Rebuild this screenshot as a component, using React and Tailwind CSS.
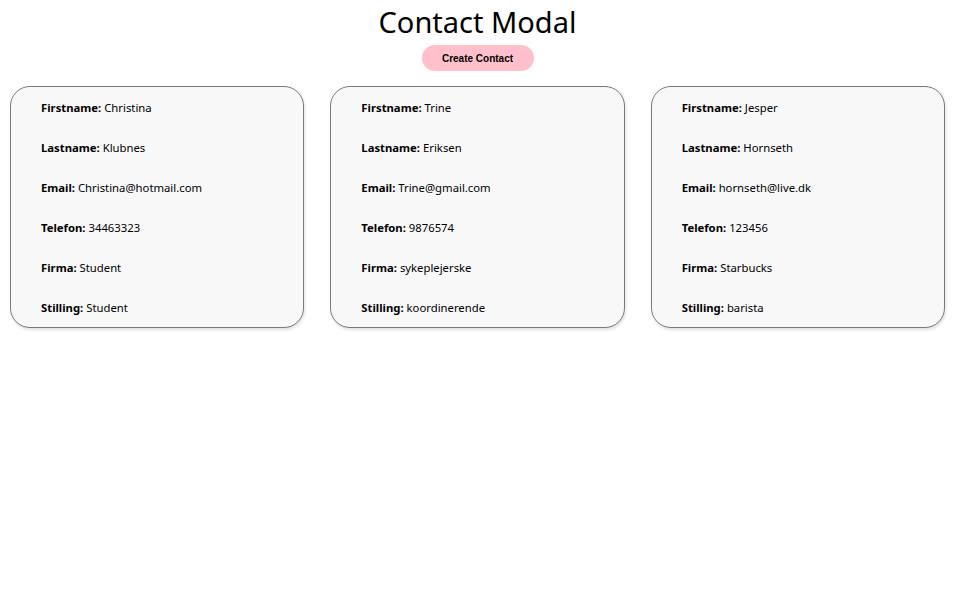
import React from 'react';

// Kontakter som vises i kortene
const contacts = [
  {
    firstname: 'Christina',
    lastname: 'Klubnes',
    email: 'Christina@hotmail.com',
    telefon: '34463323',
    firma: 'Student',
    stilling: 'Student'
  },
  {
    firstname: 'Trine',
    lastname: 'Eriksen',
    email: 'Trine@gmail.com',
    telefon: '9876574',
    firma: 'sykeplejerske',
    stilling: 'koordinerende'
  },
  {
    firstname: 'Jesper',
    lastname: 'Hornseth',
    email: 'hornseth@live.dk',
    telefon: '123456',
    firma: 'Starbucks',
    stilling: 'barista'
  }
];

const Row = ({ label, value }) => (
  <p className="h-4 leading-4 text-[11.3px] text-black">
    <span className="font-bold">{label}:</span> {value}
  </p>
);

const ContactCard = ({ contact }) => (
  <div className="h-[242px] rounded-[20px] border border-[#7a7a7a] bg-[#f8f8f8] shadow-[1px_2px_3px_rgba(0,0,0,0.12)] pl-[30px] pt-[13px] flex flex-col gap-[24px]">
    <Row label="Firstname" value={contact.firstname} />
    <Row label="Lastname" value={contact.lastname} />
    <Row label="Email" value={contact.email} />
    <Row label="Telefon" value={contact.telefon} />
    <Row label="Firma" value={contact.firma} />
    <Row label="Stilling" value={contact.stilling} />
  </div>
);

export default function App() {
  return (
    <div className="min-h-screen bg-white font-['Noto_Sans','Open_Sans',sans-serif]">
      <div className="flex flex-col items-center">
        <h1 className="h-[44px] pt-[1px] text-[29px] leading-[42px] text-black">Contact Modal</h1>
        <button className="mt-[1px] h-[26px] w-[112px] rounded-full bg-[#ffc0cb] font-['Liberation_Sans',Arial,sans-serif] text-[10px] font-bold text-black">
          Create Contact
        </button>
      </div>

      <div className="mt-[15px] grid grid-cols-3 gap-[26px] px-[10px]">
        {contacts.map((c) => (
          <ContactCard key={c.firstname} contact={c} />
        ))}
      </div>
    </div>
  );
}
